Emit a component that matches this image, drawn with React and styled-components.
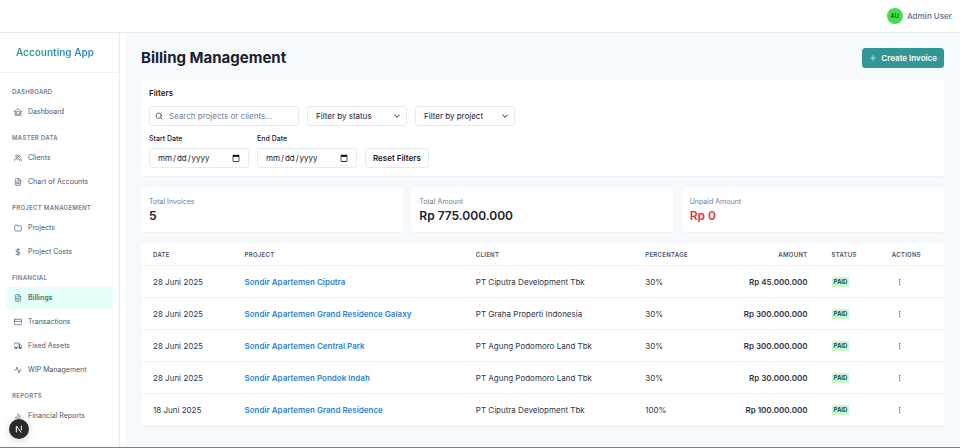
import React from 'react';
import styled, { createGlobalStyle, css } from 'styled-components';
import {
  FiUsers, FiFileText, FiFolder, FiDollarSign, FiCreditCard,
  FiTruck, FiActivity, FiBarChart2, FiSearch, FiPlus,
} from 'react-icons/fi';

const GlobalStyle = createGlobalStyle`
  *, *::before, *::after { box-sizing: border-box; }
  html, body, #root { height: 100%; }
  body {
    margin: 0;
    background: #fff;
    color: #1a202c;
    font: 8px/12px Inter, "Liberation Sans", sans-serif;
  }
  h1, h2, h3, p, ul { margin: 0; padding: 0; }
  button, input, select { font: inherit; color: inherit; }
`;

const Page = styled.div`
  display: flex;
  flex-direction: column;
  height: 100vh;
  overflow: hidden;
  border-bottom: 1px solid #7b7e85;
`;

const TopBar = styled.header`
  display: flex;
  justify-content: flex-end;
  flex: none;
  height: 33px;
  padding: 0 8px;
  border-bottom: 1px solid #e6ebf1;
`;

const UserMenu = styled.button`
  display: flex;
  align-items: center;
  gap: 4px;
  padding: 0;
  border: 0;
  background: none;
  color: #718096;
  font-size: 8px;
  font-weight: 600;
`;

const Avatar = styled.span`
  display: grid;
  place-items: center;
  width: 16px;
  height: 16px;
  border-radius: 50%;
  background: #42e04f;
  color: #1a3a2c;
  font-size: 6px;
  font-weight: 500;
`;

const Body = styled.div`
  display: flex;
  flex: 1;
  min-height: 0;
  gap: 5px;
`;

const Sidebar = styled.aside`
  flex: none;
  width: 120px;
  border-right: 1px solid #e6ebf1;
`;

const Brand = styled.div`
  padding: 12px 16px;
  border-bottom: 1px solid #edf2f7;
  font-size: 10px;
  font-weight: 600;
  line-height: 15px;

  span {
    background: linear-gradient(to right, #319795, #3182ce);
    background-clip: text;
    color: transparent;
  }
`;

const Nav = styled.nav`
  display: flex;
  flex-direction: column;
  gap: 10px;
  padding: 14px 6px;
`;

const NavHeading = styled.h3`
  padding: 0 6px;
  margin-bottom: 4px;
  color: #718096;
  font-size: 6px;
  font-weight: 600;
  line-height: 10px;
  letter-spacing: 0.05em;
  text-transform: uppercase;
`;

const NavList = styled.ul`
  display: grid;
  gap: 2px;
  list-style: none;
`;

const NavLink = styled.a`
  display: flex;
  align-items: center;
  gap: 6px;
  height: 22px;
  padding: 0 8px;
  border-radius: 3px;
  color: #4a5568;
  font-size: 7px;
  text-decoration: none;

  ${({ $active }) => $active && css`
    background: #e6fffa;
    color: #2c7a7b;
    font-weight: 600;
  `}

  svg { width: 8px; height: 8px; flex: none; }
`;

const Main = styled.main`
  display: flex;
  flex-direction: column;
  flex: 1;
  min-width: 0;
  gap: 12px;
  padding: 15px 16px;
  background: #f7fafc;
`;

const TitleRow = styled.div`
  display: flex;
  align-items: center;
  justify-content: space-between;
`;

const Title = styled.h1`
  font-size: 15px;
  font-weight: 700;
  line-height: 20px;
`;

const Button = styled.button`
  display: flex;
  align-items: center;
  gap: 4px;
  height: 20px;
  padding: 0 ${({ $primary }) => ($primary ? 6 : 7)}px;
  border: 1px solid ${({ $primary }) => ($primary ? '#319795' : '#e6ebf1')};
  border-radius: 3px;
  background: ${({ $primary }) => ($primary ? '#319795' : '#fff')};
  color: ${({ $primary }) => ($primary ? '#fff' : '#1a202c')};
  font-weight: 600;
`;

const Card = styled.section`
  padding: 8px;
  border-radius: 3px;
  background: #fff;
  box-shadow: 0 1px 2px rgba(26, 32, 44, 0.05);
`;

const FilterCard = styled(Card)`
  display: flex;
  flex-direction: column;
  gap: 8px;
`;

const CardTitle = styled.h2`
  font-size: 8px;
  font-weight: 600;
  line-height: 10px;
`;

const FilterRow = styled.div`
  display: flex;
  align-items: flex-end;
  flex-wrap: wrap;
  gap: 8px;
`;

const controlBox = css`
  height: 20px;
  border: 1px solid #e6ebf1;
  border-radius: 3px;
  background: #fff;
`;

const SearchBox = styled.label`
  ${controlBox}
  display: flex;
  align-items: center;
  gap: 6px;
  width: 150px;
  padding: 0 5px;

  svg { flex: none; }
`;

const SearchInput = styled.input`
  width: 100%;
  min-width: 0;
  padding: 0;
  border: 0;
  outline: 0;
  background: none;

  &::placeholder { color: #718096; }
`;

const SelectWrap = styled.div`
  position: relative;
  width: 100px;

  svg {
    position: absolute;
    top: 6px;
    right: 6px;
    pointer-events: none;
  }
`;

const Select = styled.select`
  ${controlBox}
  width: 100%;
  padding: 0 8px;
  appearance: none;
`;

const Field = styled.label`
  display: grid;
  gap: 4px;
  width: 100px;
  font-size: 7px;
  font-weight: 500;
  line-height: 10px;
`;

const DateInput = styled.input`
  ${controlBox}
  width: 100%;
  padding: 0 8px 0 7px;
  font-size: 8px;
  font-weight: 400;

  &::-webkit-calendar-picker-indicator {
    width: 8px;
    height: 8px;
    padding: 0;
  }
`;

const Stats = styled.div`
  display: grid;
  grid-template-columns: repeat(3, 1fr);
  gap: 8px;
`;

const StatLabel = styled.p`
  color: #718096;
  font-size: 7px;
  line-height: 11px;
`;

const StatValue = styled.p`
  color: ${({ $danger }) => ($danger ? '#d9393e' : '#1a202c')};
  font-size: 12px;
  font-weight: 600;
  line-height: 17px;
`;

const TableCard = styled(Card)`
  padding: 0;
`;

const Table = styled.table`
  width: 100%;
  border-collapse: separate;
  border-spacing: 0;
  table-layout: fixed;
`;

const Col = styled.col`
  width: ${({ $share }) => $share}%;
`;

const Th = styled.th`
  height: 22px;
  padding: 0 12px;
  border-bottom: 1px solid #f0f4f8;
  color: #4a5568;
  font-size: 6px;
  font-weight: 600;
  letter-spacing: 0.05em;
  text-align: ${({ $right }) => ($right ? 'right' : 'left')};
  text-transform: uppercase;
`;

const Td = styled.td`
  height: 32px;
  padding: 0 12px;
  border-bottom: 1px solid #f0f4f8;
  color: #2d3748;
  font-weight: ${({ $strong }) => ($strong ? 600 : 400)};
  text-align: ${({ $right }) => ($right ? 'right' : 'left')};
  white-space: nowrap;
`;

const ProjectLink = styled.a`
  color: #3182ce;
  font-weight: 600;
  text-decoration: none;
`;

const Badge = styled.span`
  display: inline-block;
  padding: 0 2px;
  border-radius: 1px;
  background: #c6f6d5;
  color: #22543d;
  font-size: 6px;
  font-weight: 700;
  line-height: 10px;
  vertical-align: middle;
`;

const MenuButton = styled.button`
  display: grid;
  place-items: center;
  width: 16px;
  height: 16px;
  padding: 0;
  border: 0;
  background: none;
`;

const DevBadge = styled.button`
  position: fixed;
  left: 9px;
  bottom: 9px;
  display: grid;
  place-items: center;
  width: 20px;
  height: 20px;
  padding: 0;
  border: 0;
  border-radius: 50%;
  background: #2b2b2b;
  box-shadow: 0 2px 8px rgba(0, 0, 0, 0.18);
`;

const stroke = { fill: 'none', stroke: 'currentColor', strokeWidth: 2, strokeLinecap: 'round', strokeLinejoin: 'round' };

const HomeIcon = () => (
  <svg viewBox="0 0 24 24" {...stroke} aria-hidden="true">
    <path d="M1 11 12 2l11 9M3 10v12h18V10M7 17v-3a5 4 0 0 1 10 0v3z" />
  </svg>
);

const ChevronIcon = () => (
  <svg width="8" height="8" viewBox="0 0 24 24" {...stroke} strokeWidth="3" aria-hidden="true">
    <path d="m5 9 7 7 7-7" />
  </svg>
);

const DotsIcon = () => (
  <svg width="8" height="8" viewBox="0 0 24 24" fill="currentColor" aria-hidden="true">
    <circle cx="11" cy="5" r="2" />
    <circle cx="11" cy="12" r="2" />
    <circle cx="11" cy="19" r="2" />
  </svg>
);

const DevLogo = () => (
  <svg width="8" height="8" viewBox="0 0 24 24" fill="none" stroke="#fff" strokeWidth="3" aria-hidden="true">
    <path d="M4 22V3l15 20M19 2v14" />
  </svg>
);

const sections = [
  { title: 'Dashboard', items: [['Dashboard', HomeIcon]] },
  { title: 'Master Data', items: [['Clients', FiUsers], ['Chart of Accounts', FiFileText]] },
  { title: 'Project Management', items: [['Projects', FiFolder], ['Project Costs', FiDollarSign]] },
  {
    title: 'Financial',
    items: [
      ['Billings', FiFileText],
      ['Transactions', FiCreditCard],
      ['Fixed Assets', FiTruck],
      ['WIP Management', FiActivity],
    ],
  },
  { title: 'Reports', items: [['Financial Reports', FiBarChart2]] },
];

const invoices = [
  ['28 Juni 2025', 'Sondir Apartemen Ciputra', 'PT Ciputra Development Tbk', '30%', 'Rp 45.000.000'],
  ['28 Juni 2025', 'Sondir Apartemen Grand Residence Galaxy', 'PT Graha Properti Indonesia', '30%', 'Rp 300.000.000'],
  ['28 Juni 2025', 'Sondir Apartemen Central Park', 'PT Agung Podomoro Land Tbk', '30%', 'Rp 300.000.000'],
  ['28 Juni 2025', 'Sondir Apartemen Pondok Indah', 'PT Agung Podomoro Land Tbk', '30%', 'Rp 30.000.000'],
  ['18 Juni 2025', 'Sondir Apartemen Grand Residence', 'PT Ciputra Development Tbk', '100%', 'Rp 100.000.000'],
];

const columnShares = [11.4, 28.8, 21.1, 11, 12.2, 7.5, 8];

const FilterSelect = ({ label }) => (
  <SelectWrap>
    <Select aria-label={label} defaultValue="">
      <option value="">{label}</option>
    </Select>
    <ChevronIcon />
  </SelectWrap>
);

export default function App() {
  return (
    <>
      <GlobalStyle />
      <Page>
        <TopBar>
          <UserMenu type="button">
            <Avatar>AU</Avatar>
            Admin User
          </UserMenu>
        </TopBar>
        <Body>
          <Sidebar>
            <Brand><span>Accounting App</span></Brand>
            <Nav aria-label="Main">
              {sections.map(({ title, items }) => (
                <div key={title}>
                  <NavHeading>{title}</NavHeading>
                  <NavList>
                    {items.map(([name, Icon]) => (
                      <li key={name}>
                        <NavLink href="#" $active={name === 'Billings'}>
                          <Icon />
                          {name}
                        </NavLink>
                      </li>
                    ))}
                  </NavList>
                </div>
              ))}
            </Nav>
          </Sidebar>
          <Main>
            <TitleRow>
              <Title>Billing Management</Title>
              <Button type="button" $primary>
                <FiPlus size={8} />
                Create Invoice
              </Button>
            </TitleRow>
            <FilterCard>
              <CardTitle>Filters</CardTitle>
              <FilterRow>
                <SearchBox>
                  <FiSearch size={8} />
                  <SearchInput aria-label="Search" placeholder="Search projects or clients..." />
                </SearchBox>
                <FilterSelect label="Filter by status" />
                <FilterSelect label="Filter by project" />
              </FilterRow>
              <FilterRow>
                <Field>
                  Start Date
                  <DateInput type="date" />
                </Field>
                <Field>
                  End Date
                  <DateInput type="date" />
                </Field>
                <Button type="button">Reset Filters</Button>
              </FilterRow>
            </FilterCard>
            <Stats>
              <Card>
                <StatLabel>Total Invoices</StatLabel>
                <StatValue>5</StatValue>
              </Card>
              <Card>
                <StatLabel>Total Amount</StatLabel>
                <StatValue>Rp 775.000.000</StatValue>
              </Card>
              <Card>
                <StatLabel>Unpaid Amount</StatLabel>
                <StatValue $danger>Rp 0</StatValue>
              </Card>
            </Stats>
            <TableCard>
              <Table>
                <colgroup>
                  {columnShares.map((share, i) => <Col key={i} $share={share} />)}
                </colgroup>
                <thead>
                  <tr>
                    <Th>Date</Th>
                    <Th>Project</Th>
                    <Th>Client</Th>
                    <Th>Percentage</Th>
                    <Th $right>Amount</Th>
                    <Th>Status</Th>
                    <Th>Actions</Th>
                  </tr>
                </thead>
                <tbody>
                  {invoices.map(([date, project, client, percentage, amount]) => (
                    <tr key={project}>
                      <Td>{date}</Td>
                      <Td><ProjectLink href="#">{project}</ProjectLink></Td>
                      <Td>{client}</Td>
                      <Td>{percentage}</Td>
                      <Td $right $strong>{amount}</Td>
                      <Td><Badge>PAID</Badge></Td>
                      <Td>
                        <MenuButton type="button" aria-label={`Actions for ${project}`}>
                          <DotsIcon />
                        </MenuButton>
                      </Td>
                    </tr>
                  ))}
                </tbody>
              </Table>
            </TableCard>
          </Main>
        </Body>
        <DevBadge type="button" aria-label="Developer tools">
          <DevLogo />
        </DevBadge>
      </Page>
    </>
  );
}
